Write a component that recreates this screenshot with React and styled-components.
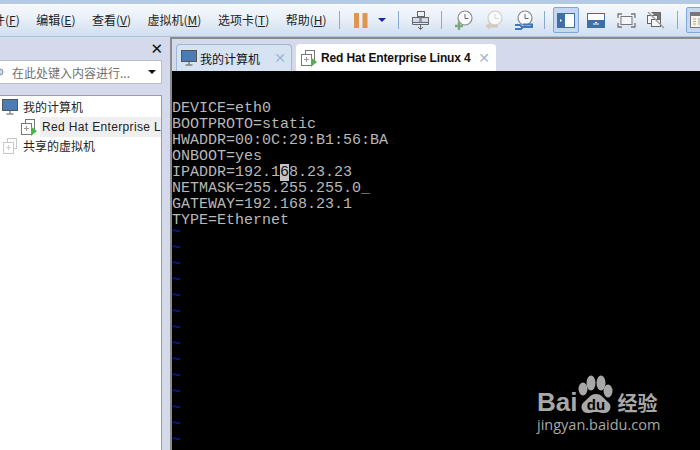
import React from "react";
import styled, { createGlobalStyle } from "styled-components";

const GlobalStyle = createGlobalStyle`
  html, body {
    margin: 0;
    padding: 0;
    background: #000;
  }
`;

const uiFont = `"Noto Sans CJK SC", "Noto Sans", sans-serif`;

const Page = styled.div`
  width: 700px;
  height: 450px;
  overflow: hidden;
  display: flex;
  flex-direction: column;
  font-family: ${uiFont};
  font-size: 12px;
  color: #222;
  background: #d4d9ec;
`;

const Toolbar = styled.div`
  height: 32px;
  flex: none;
  display: flex;
  align-items: center;
  border-top: 4px solid #b4cbe6;
  border-bottom: 1px solid #a9c3e0;
  background: linear-gradient(#f6f9fd, #e9f0f9 45%, #cfdeef);
`;

const Menu = styled.div`
  display: flex;
  gap: 16.5px;
  width: 346px;
  flex: none;
  margin-left: -19px;
  white-space: nowrap;
`;

const MenuItem = styled.span`
  line-height: 16px;
  u {
    text-underline-offset: 1px;
  }
`;

const Separator = styled.div`
  width: 1px;
  height: 18px;
  flex: none;
  margin: 0 ${(p) => p.$right}px 0 ${(p) => p.$left}px;
  background: #8aa9cf;
`;

const ToolButton = styled.div`
  width: ${(p) => p.$w}px;
  height: 26px;
  flex: none;
  display: flex;
  align-items: center;
  justify-content: center;
  box-sizing: border-box;
  margin-right: ${(p) => p.$gap || 0}px;
  border-radius: 2px;
  border: 1px solid ${(p) => (p.$active ? "#7fa6d6" : "transparent")};
  background: ${(p) => (p.$active ? "#c5d8ef" : "transparent")};
  svg {
    flex: none;
  }
`;

const Body = styled.div`
  flex: 1;
  display: flex;
  min-height: 0;
`;

const Sidebar = styled.div`
  width: 172px;
  flex: none;
  box-sizing: border-box;
  padding-right: 8px;
  display: flex;
  flex-direction: column;
  background: #d4d9ec;
  border-right: 2px solid #8b8b8b;
`;

const SideHeader = styled.div`
  height: 23px;
  flex: none;
  display: flex;
  align-items: center;
  justify-content: flex-end;
  font-size: 15px;
  font-family: "DejaVu Sans", sans-serif;
  color: #111;
  margin-right: -1px;
`;

const SearchBox = styled.div`
  height: 24px;
  flex: none;
  box-sizing: border-box;
  display: flex;
  align-items: center;
  background: #fff;
  border: 1px solid #b9bccb;
  border-left: none;
  color: #6f6f6f;
`;

const SearchGlyph = styled.svg`
  width: 12px;
  height: 12px;
  flex: none;
`;

const SearchText = styled.span`
  flex: 1;
  white-space: nowrap;
`;

const DownArrow = styled.span`
  width: 0;
  height: 0;
  margin-right: ${(p) => p.$space || 0}px;
  border-left: 4px solid transparent;
  border-right: 4px solid transparent;
  border-top: 4px solid ${(p) => p.$color || "#111"};
`;

const TreePanel = styled.div`
  flex: 1;
  margin-top: 11px;
  box-sizing: border-box;
  padding-top: 1px;
  background: #fff;
  border: 1px solid #9a9dae;
  border-left: none;
  border-bottom: none;
  overflow: hidden;
`;

const TreeRow = styled.div`
  height: 20px;
  display: flex;
  align-items: center;
  gap: ${(p) => p.$gap}px;
  margin-top: ${(p) => p.$top || 0}px;
  padding-left: ${(p) => p.$indent}px;
  white-space: nowrap;
`;

const TreeLabel = styled.span`
  flex: ${(p) => (p.$selected ? 1 : "none")};
  height: 20px;
  line-height: 20px;
  padding-left: ${(p) => (p.$selected ? 2 : 0)}px;
  background: ${(p) => (p.$selected ? "#efefef" : "transparent")};
  overflow: hidden;
  font-family: ${(p) => (p.$latin ? `"Liberation Sans", sans-serif` : uiFont)};
  font-size: 12px;
  letter-spacing: ${(p) => (p.$latin ? "0.35px" : "0")};
`;

const Main = styled.div`
  flex: 1;
  display: flex;
  flex-direction: column;
  min-width: 0;
`;

const TabStrip = styled.div`
  height: 34px;
  flex: none;
  box-sizing: border-box;
  display: flex;
  align-items: flex-end;
  gap: 4px;
  padding-left: 4px;
  background: #d4d9ec;
  border-top: 2px solid #8a8a8a;
`;

const Tab = styled.div`
  width: ${(p) => p.$w}px;
  height: 27px;
  box-sizing: border-box;
  display: flex;
  align-items: center;
  gap: ${(p) => (p.$active ? 4 : 3)}px;
  padding: 0 5px 0 4px;
  border: 1px solid ${(p) => (p.$active ? "#fff" : "#9db8d8")};
  border-bottom: none;
  border-radius: 4px 4px 0 0;
  background: ${(p) => (p.$active ? "#fff" : "#d6e3f2")};
  color: #111;
`;

const TabTitle = styled.span`
  flex: 1;
  white-space: nowrap;
  font-family: ${(p) => (p.$active ? `"Liberation Sans", sans-serif` : uiFont)};
  font-weight: ${(p) => (p.$active ? 700 : 400)};
  font-size: 12px;
  letter-spacing: ${(p) => (p.$active ? "-0.15px" : "0")};
`;

const TabClose = styled.span`
  font-family: "DejaVu Sans", sans-serif;
  font-size: 14px;
  font-weight: 700;
  line-height: 1;
  color: #9db8d4;
`;

const Console = styled.div`
  flex: 1;
  position: relative;
  overflow: hidden;
  box-sizing: border-box;
  padding-top: 30px;
  background: #000;
  font-family: "Liberation Mono", monospace;
  font-size: 15px;
  color: #b8b8b8;
`;

const ConsoleLine = styled.div`
  height: 16px;
  line-height: 16px;
  white-space: pre;
`;

const Cursor = styled.span`
  background: #c4c4c4;
  color: #111;
`;

const EmptyLine = styled.div`
  height: 16px;
  line-height: 8px;
  font-weight: 700;
  color: #1010b0;
`;

const Watermark = styled.div`
  position: absolute;
  right: 39px;
  bottom: 16px;
  width: 124px;
  color: #a8a8a8;
`;

const BrandRow = styled.div`
  display: flex;
  align-items: flex-end;
  height: 40px;
`;

const BrandName = styled.span`
  font-family: "Liberation Sans", sans-serif;
  font-size: 26px;
  font-weight: 700;
  line-height: 26px;
`;

const BrandSuffix = styled.span`
  font-family: ${uiFont};
  font-size: 20px;
  font-weight: 700;
  line-height: 24px;
  margin-left: 2px;
  white-space: nowrap;
`;

const BrandUrl = styled.div`
  font-family: "Open Sans", "Liberation Sans", sans-serif;
  font-size: 14.5px;
  line-height: 18px;
  margin-top: 1px;
  white-space: nowrap;
`;

const PawBox = styled.div`
  width: 38px;
  height: 40px;
  flex: none;
`;

const Monitor = () => (
  <svg width="16" height="16" viewBox="0 0 16 16">
    <rect x="0.5" y="0.5" width="15" height="11" fill="#4a7db5" stroke="#555" />
    <path d="M8 12v2.5M4.5 15h7" stroke="#555" fill="none" />
  </svg>
);

const VmIcon = ({ faded }) => (
  <svg width="16" height="17" viewBox="0 0 16 17">
    <rect x="4.5" y="0.5" width="9" height="10" fill="#fff" stroke={faded ? "#c8c8c8" : "#777"} />
    <rect x="0.5" y="4.5" width="10" height="11" fill="#fff" stroke={faded ? "#c8c8c8" : "#777"} />
    <path d="M3 9.5h5M5.5 7v5" stroke={faded ? "#ccc" : "#999"} />
    {!faded && <path d="M10 7.5l6 4.5-6 5z" fill="#4cb848" />}
  </svg>
);

const Pause = () => (
  <svg width="14" height="15" viewBox="0 0 14 15">
    <rect width="5" height="15" fill="#dc9650" />
    <rect x="8.5" width="5" height="15" fill="#dc9650" />
  </svg>
);

const SwitchIcon = () => (
  <svg width="17" height="19" viewBox="0 0 17 19" fill="none" stroke="#666">
    <rect x="5.5" y="0.5" width="7" height="5" fill="#eef2f8" />
    <rect x="0.5" y="6.5" width="7.5" height="5" fill="#cfdcf0" />
    <rect x="9" y="6.5" width="7.5" height="5" fill="#cfdcf0" />
    <path d="M0.5 11.5v2h16v-2M8.5 13.5v5M6 16l2.5 2.5L11 16" />
  </svg>
);

const Clock = ({ badge, faded }) => {
  const line = faded ? "#cfcfcf" : "#8a8a8a";
  return (
    <svg width="19" height="20" viewBox="0 0 19 20" fill="none">
      <circle cx="11" cy="8" r="7" fill="#f8fafd" stroke={line} strokeWidth="1.2" />
      <path d="M11 4v4.5h3.5" stroke={faded ? "#d4d4d4" : "#666"} />
      {badge === "add" && <path d="M5 12v8M1 16h8" stroke="#7da87d" strokeWidth="2.4" />}
      {badge === "back" && <path d="M1 16l5-3.5v2H14v3H6v2z" fill="#d8c8bc" />}
      {badge === "tool" && <path d="M1 15h5l2 2h10v-2.5H9M1 19h6l2-2" stroke="#3d78b8" strokeWidth="2" />}
    </svg>
  );
};

const SidePaneIcon = () => (
  <svg width="18" height="15" viewBox="0 0 18 15">
    <rect x="0.5" y="0.5" width="17" height="14" fill="#fff" stroke="#3f6fa8" />
    <rect x="1" y="1" width="7" height="13" fill="#3f6fa8" />
    <path d="M3 6l2 1.5L3 9z" fill="#fff" />
  </svg>
);

const BottomPaneIcon = () => (
  <svg width="18" height="15" viewBox="0 0 18 15">
    <rect x="0.5" y="0.5" width="17" height="14" fill="#fff" stroke="#3f6fa8" />
    <rect x="1" y="7" width="16" height="7" fill="#3f6fa8" />
    <path d="M6 11h6M8 10l1-1 1 1" stroke="#fff" fill="none" />
  </svg>
);

const FullscreenIcon = () => (
  <svg width="19" height="15" viewBox="0 0 19 15" fill="none" stroke="#777">
    <rect x="4" y="3.5" width="11" height="8" fill="#f4f6fa" />
    <path d="M1 5V1h4M14 1h4v4M18 10v4h-4M5 14H1v-4" strokeWidth="1.3" />
  </svg>
);

const UnityIcon = () => (
  <svg width="18" height="17" viewBox="0 0 18 17" fill="none" stroke="#666">
    <path d="M4.5 0.5h9v9" fill="#777" />
    <rect x="0.5" y="3.5" width="10" height="8" fill="#f4f6fa" />
    <rect x="4.5" y="7.5" width="9" height="7" fill="#f4f6fa" />
    <path d="M1 0l16 16" stroke="#999" strokeWidth="1.3" />
  </svg>
);

const LibraryIcon = () => (
  <svg width="18" height="16" viewBox="0 0 18 16">
    <rect x="0.5" y="0.5" width="17" height="15" fill="#f4f4f0" stroke="#777" />
    <rect x="1" y="1" width="16" height="3" fill="#777" />
    <path d="M3 7h3M3 9.5h3M3 12h3" stroke="#c9a84a" />
    <rect x="8" y="6" width="8" height="7" fill="#ccc" />
  </svg>
);

const Paw = () => (
  <svg width="38" height="40" viewBox="0 0 38 40">
    <ellipse cx="6" cy="14" rx="4.5" ry="6.5" fill="#a8a8a8" />
    <ellipse cx="14" cy="8" rx="4.5" ry="7.5" fill="#a8a8a8" />
    <ellipse cx="24" cy="8" rx="4.5" ry="7.5" fill="#a8a8a8" />
    <ellipse cx="31" cy="16" rx="4.5" ry="6.5" fill="#a8a8a8" />
    <path d="M19 19c6 0 8 5 12 8 5 4 2 12-5 11-3-.5-5-1-7-1s-4 .5-7 1c-7 1-10-7-5-11 4-3 6-8 12-8z" fill="#a8a8a8" />
    <text x="19" y="35" textAnchor="middle" fontFamily="Liberation Sans, sans-serif" fontSize="15" fontWeight="700" fill="#000">du</text>
  </svg>
);

const menus = [
  ["文件", "F"],
  ["编辑", "E"],
  ["查看", "V"],
  ["虚拟机", "M"],
  ["选项卡", "T"],
  ["帮助", "H"],
];

const configLines = [
  "DEVICE=eth0",
  "BOOTPROTO=static",
  "HWADDR=00:0C:29:B1:56:BA",
  "ONBOOT=yes",
];

export default function App() {
  return (
    <Page>
      <GlobalStyle />
      <Toolbar>
        <Menu>
          {menus.map(([label, key]) => (
            <MenuItem key={key}>
              {label}(<u>{key}</u>)
            </MenuItem>
          ))}
        </Menu>
        <Separator $left={12} $right={14} />
        <ToolButton $w={14}>
          <Pause />
        </ToolButton>
        <ToolButton $w={27}>
          <DownArrow $color="#2222aa" />
        </ToolButton>
        <Separator $left={3} $right={13} />
        <ToolButton $w={17}>
          <SwitchIcon />
        </ToolButton>
        <Separator $left={12} $right={12} />
        <ToolButton $w={19} $gap={11}>
          <Clock badge="add" />
        </ToolButton>
        <ToolButton $w={19} $gap={11}>
          <Clock badge="back" faded />
        </ToolButton>
        <ToolButton $w={19}>
          <Clock badge="tool" />
        </ToolButton>
        <Separator $left={11} $right={8} />
        <ToolButton $w={26} $gap={8} $active>
          <SidePaneIcon />
        </ToolButton>
        <ToolButton $w={18} $gap={12}>
          <BottomPaneIcon />
        </ToolButton>
        <ToolButton $w={19} $gap={11}>
          <FullscreenIcon />
        </ToolButton>
        <ToolButton $w={18}>
          <UnityIcon />
        </ToolButton>
        <Separator $left={12} $right={8} />
        <ToolButton $w={26} $active>
          <LibraryIcon />
        </ToolButton>
      </Toolbar>
      <Body>
        <Sidebar>
          <SideHeader>✕</SideHeader>
          <SearchBox>
            <SearchGlyph viewBox="0 0 12 12">
              <circle cx="0" cy="6" r="3" fill="#cdd6e4" stroke="#7f93ad" />
            </SearchGlyph>
            <SearchText>在此处键入内容进行...</SearchText>
            <DownArrow $space={5} />
          </SearchBox>
          <TreePanel>
            <TreeRow $indent={2} $gap={5}>
              <Monitor />
              <TreeLabel>我的计算机</TreeLabel>
            </TreeRow>
            <TreeRow $indent={21} $gap={3}>
              <VmIcon />
              <TreeLabel $selected $latin>Red Hat Enterprise Linux 4</TreeLabel>
            </TreeRow>
            <TreeRow $indent={3} $gap={4} $top={-1}>
              <VmIcon faded />
              <TreeLabel>共享的虚拟机</TreeLabel>
            </TreeRow>
          </TreePanel>
        </Sidebar>
        <Main>
          <TabStrip>
            <Tab $w={116}>
              <Monitor />
              <TabTitle>我的计算机</TabTitle>
              <TabClose>✕</TabClose>
            </Tab>
            <Tab $w={200} $active>
              <VmIcon />
              <TabTitle $active>Red Hat Enterprise Linux 4</TabTitle>
              <TabClose>✕</TabClose>
            </Tab>
          </TabStrip>
          <Console>
            {configLines.map((line) => (
              <ConsoleLine key={line}>{line}</ConsoleLine>
            ))}
            <ConsoleLine>
              IPADDR=192.1<Cursor>6</Cursor>8.23.23
            </ConsoleLine>
            <ConsoleLine>NETMASK=255.255.255.0_</ConsoleLine>
            <ConsoleLine>GATEWAY=192.168.23.1</ConsoleLine>
            <ConsoleLine>TYPE=Ethernet</ConsoleLine>
            {Array.from({ length: 14 }, (_, i) => (
              <EmptyLine key={i}>~</EmptyLine>
            ))}
            <Watermark>
              <BrandRow>
                <BrandName>Bai</BrandName>
                <PawBox>
                  <Paw />
                </PawBox>
                <BrandSuffix>经验</BrandSuffix>
              </BrandRow>
              <BrandUrl>jingyan.baidu.com</BrandUrl>
            </Watermark>
          </Console>
        </Main>
      </Body>
    </Page>
  );
}
